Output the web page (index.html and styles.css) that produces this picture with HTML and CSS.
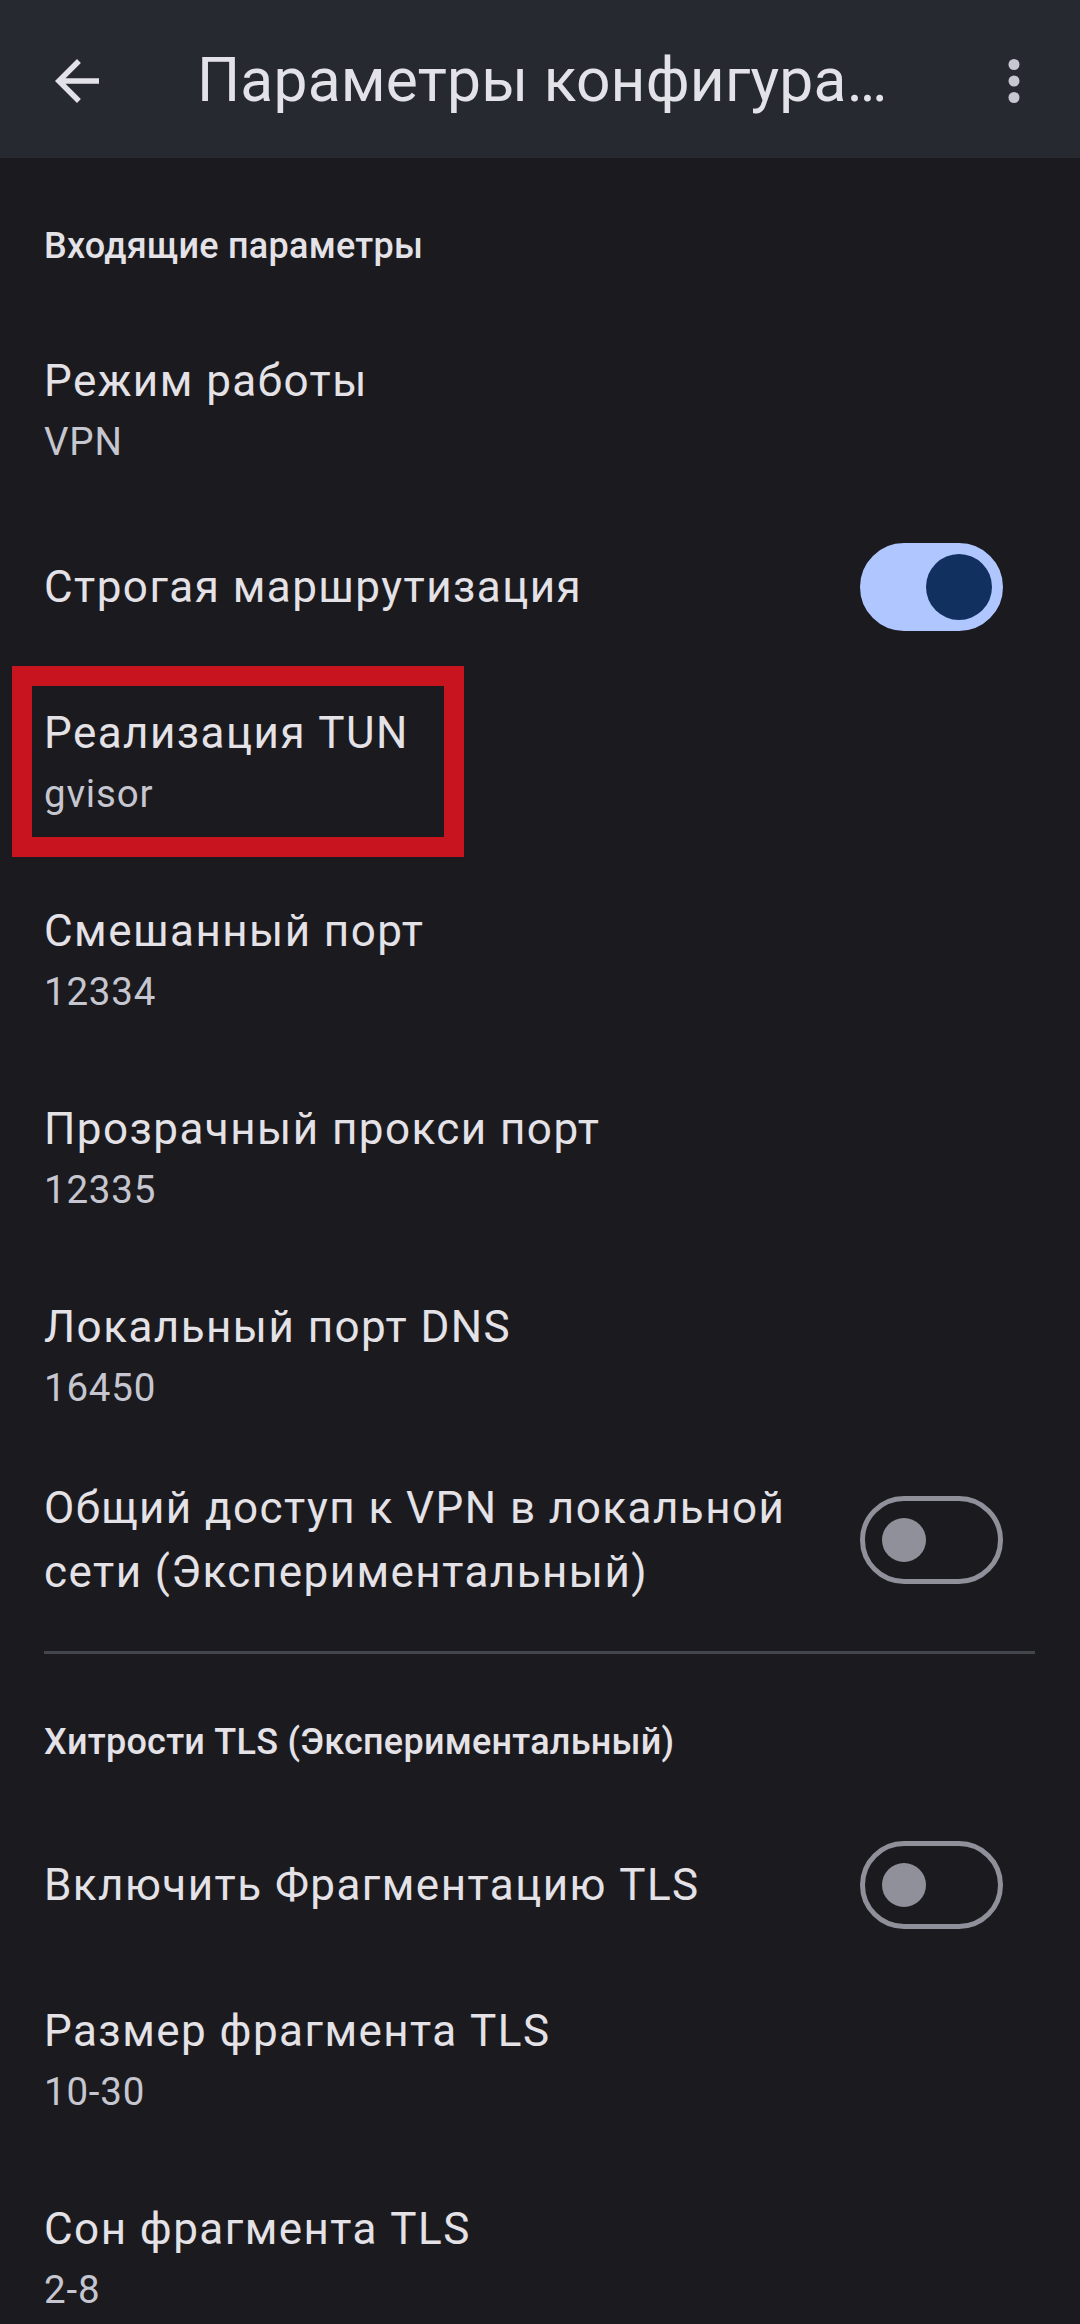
FILE: index.html
```html
<!DOCTYPE html>
<html lang="ru">
<head>
<meta charset="utf-8">
<title>Параметры конфигурации</title>
<link rel="stylesheet" href="styles.css">
</head>
<body>
<div class="screen">
  <header class="appbar">
    <div class="icon-btn back">
      <svg viewBox="0 0 24 24" width="66" height="66"><path d="M20 11H7.83l5.59-5.59L12 4l-8 8 8 8 1.41-1.41L7.83 13H20v-2z" fill="currentColor"/></svg>
    </div>
    <div class="appbar-title">Параметры конфигура…</div>
    <div class="icon-btn more">
      <svg viewBox="0 0 24 24" width="66" height="66"><circle cx="12" cy="6" r="2" fill="currentColor"/><circle cx="12" cy="12" r="2" fill="currentColor"/><circle cx="12" cy="18" r="2" fill="currentColor"/></svg>
    </div>
  </header>

  <main class="list">
    <div class="category">Входящие параметры</div>

    <div class="item two">
      <div class="texts">
        <div class="title">Режим работы</div>
        <div class="summary">VPN</div>
      </div>
    </div>

    <div class="item single">
      <div class="texts">
        <div class="title">Строгая маршрутизация</div>
      </div>
      <div class="switch on"><span class="thumb"></span></div>
    </div>

    <div class="item two marked">
      <div class="texts">
        <div class="title">Реализация TUN</div>
        <div class="summary">gvisor</div>
      </div>
      <div class="highlight"></div>
    </div>

    <div class="item two">
      <div class="texts">
        <div class="title">Смешанный порт</div>
        <div class="summary">12334</div>
      </div>
    </div>

    <div class="item two">
      <div class="texts">
        <div class="title">Прозрачный прокси порт</div>
        <div class="summary">12335</div>
      </div>
    </div>

    <div class="item two">
      <div class="texts">
        <div class="title">Локальный порт DNS</div>
        <div class="summary">16450</div>
      </div>
    </div>

    <div class="item multi">
      <div class="texts">
        <div class="title wrap">Общий доступ к VPN в локальной сети (Экспериментальный)</div>
      </div>
      <div class="switch"><span class="thumb"></span></div>
    </div>

    <div class="divider"></div>

    <div class="category">Хитрости TLS (Экспериментальный)</div>

    <div class="item single">
      <div class="texts">
        <div class="title">Включить Фрагментацию TLS</div>
      </div>
      <div class="switch"><span class="thumb"></span></div>
    </div>

    <div class="item two">
      <div class="texts">
        <div class="title">Размер фрагмента TLS</div>
        <div class="summary">10-30</div>
      </div>
    </div>

    <div class="item two">
      <div class="texts">
        <div class="title">Сон фрагмента TLS</div>
        <div class="summary">2-8</div>
      </div>
    </div>
  </main>
</div>
</body>
</html>
```

FILE: styles.css
```css
* { box-sizing: border-box; }

html, body {
  margin: 0;
  padding: 0;
  background: #1b1b1f;
}

body {
  font-family: Roboto, "Noto Sans", "Liberation Sans", sans-serif;
  color: #e4e2e7;
}

.screen {
  width: 1080px;
  height: 2324px;
  overflow: hidden;
  background: #1b1b1f;
}

/* App bar */
.appbar {
  height: 158px;
  background: #262930;
  display: flex;
  align-items: center;
  padding: 4px 33px 0 44px;
}

.icon-btn {
  width: 66px;
  height: 66px;
  flex: none;
  display: flex;
}

.back { color: #e3e2e8; }
.more { color: #c6c7d1; margin-left: auto; }

.appbar-title {
  margin-left: 87px;
  font-size: 60.5px;
  line-height: 80px;
  font-weight: 400;
  letter-spacing: 0.2px;
  color: #e3e2e8;
  white-space: nowrap;
}

/* List */
.list {
  display: flex;
  flex-direction: column;
}

.category {
  height: 154px;
  padding: 64px 44px 0;
  font-size: 36px;
  line-height: 48px;
  font-weight: 500;
  letter-spacing: 0.25px;
  color: #e4e2e7;
}

.item {
  position: relative;
  display: flex;
  align-items: center;
  padding: 0 44px;
}

.item.two { height: 198px; }
.item.single { height: 154px; }
.item.multi { height: 168px; }

.texts {
  flex: 1;
  min-width: 0;
}

.title {
  font-size: 44px;
  line-height: 62px;
  letter-spacing: 1.45px;
  color: #e4e2e7;
  white-space: nowrap;
}

.title.wrap {
  white-space: normal;
  line-height: 64px;
  max-width: 780px;
}

.summary {
  font-size: 38.5px;
  line-height: 60px;
  letter-spacing: 0.8px;
  color: #c6c6d0;
}

/* Switch */
.switch {
  flex: none;
  width: 143px;
  height: 88px;
  border-radius: 44px;
  border: 5.5px solid #8f9099;
  background: #1b1b1f;
  display: flex;
  align-items: center;
  padding-left: 16.5px;
  margin-right: 33px;
  margin-left: 20px;
}

.switch .thumb {
  width: 44px;
  height: 44px;
  border-radius: 50%;
  background: #8f9099;
}

.switch.on {
  background: #afc6ff;
  border-color: #afc6ff;
  padding-left: 60.5px;
}

.switch.on .thumb {
  width: 66px;
  height: 66px;
  background: #12305f;
}

.divider {
  height: 3px;
  margin: 27px 45px 0 44px;
  background: #44464e;
}

/* Annotation overlay */
.highlight {
  position: absolute;
  left: 12px;
  top: 2px;
  width: 452px;
  height: 191px;
  border: 20px solid #c8141f;
  pointer-events: none;
}
```
